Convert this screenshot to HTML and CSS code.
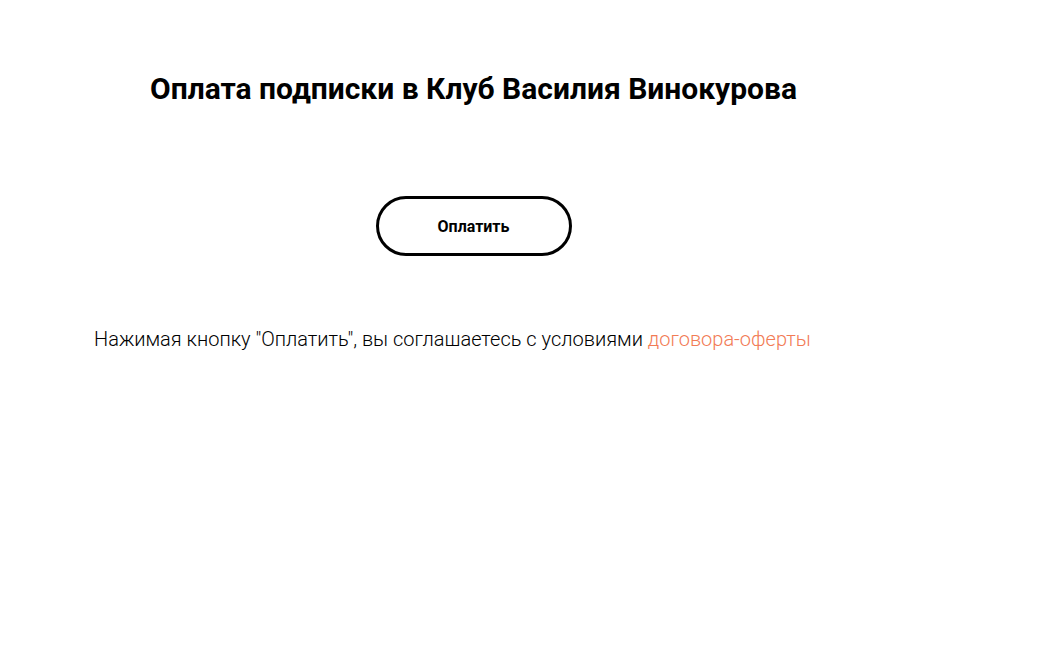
FILE: index.html
```html
<!DOCTYPE html>
<html lang="ru">
<head>
<meta charset="utf-8">
<title>Оплата подписки</title>
<link rel="stylesheet" href="styles.css">
</head>
<body>
<main class="pay-form">
  <h1 class="pay-title">Оплата подписки в Клуб Василия Винокурова</h1>
  <div class="pay-action">
    <button class="pay-button" type="button">Оплатить</button>
  </div>
  <p class="pay-note">Нажимая кнопку "Оплатить", вы соглашаетесь с условиями <a class="pay-link" href="#">договора-оферты</a></p>
</main>
</body>
</html>
```
FILE: styles.css
```css
html, body {
  margin: 0;
  padding: 0;
  background: #fff;
}

body {
  font-family: Roboto, "Noto Sans", sans-serif;
  color: #000;
}

.pay-form {
  width: 759px;
  margin-left: 94px;
  padding-top: 71px;
}

.pay-title {
  margin: 0;
  text-align: center;
  font-size: 30px;
  font-weight: 700;
  line-height: 36px;
}

.pay-action {
  display: flex;
  justify-content: center;
  margin-top: 89px;
}

.pay-button {
  width: 196px;
  height: 60px;
  border: 3px solid #000;
  border-radius: 30px;
  background: #fff;
  font-family: Roboto, sans-serif;
  font-size: 16px;
  font-weight: 700;
  color: #000;
  cursor: pointer;
}

.pay-note {
  margin: 70px 0 0;
  font-size: 20px;
  font-weight: 300;
  line-height: 26px;
}

.pay-link {
  color: #f27b55;
  text-decoration: none;
}
```
